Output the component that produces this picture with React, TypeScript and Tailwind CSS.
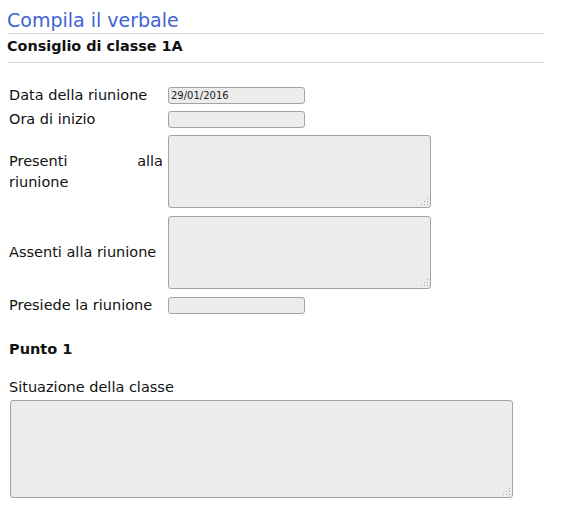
import React from "react";

const field =
  "block bg-[#ececec] border border-[#a3a3a3] rounded-[3px] outline-none text-[10px] px-[2px] text-[#222]";

function Grip() {
  return (
    <svg
      className="absolute right-[2px] bottom-[2px]"
      width="9"
      height="9"
      viewBox="0 0 9 9"
    >
      {[
        [7, 1],
        [7, 4],
        [4, 4],
        [7, 7],
        [4, 7],
        [1, 7],
      ].map(([x, y], i) => (
        <rect key={i} x={x} y={y} width="1" height="1" fill="#a8a8a8" />
      ))}
    </svg>
  );
}

function Area({ cls }: { cls: string }) {
  return (
    <div className={"relative " + cls}>
      <textarea className={field + " w-full h-full resize-none"} />
      <Grip />
    </div>
  );
}

export default function App() {
  return (
    <div
      className="bg-white w-[561px] h-[519px] text-[14.5px] text-[#111]"
      style={{ fontFamily: '"DejaVu Sans", Verdana, sans-serif' }}
    >
      <div className="pl-[7px] w-[544px]">
        <h1 className="text-[19px] leading-[23px] pt-[9px] pb-[1px] text-[#3f63d4] border-b border-[#dcdcdc]">
          Compila il verbale
        </h1>
        <h2 className="text-[14.4px] font-bold leading-[17px] pt-[4px] pb-[7px] border-b border-[#dcdcdc]">
          Consiglio di classe 1A
        </h2>
      </div>
      <div className="pl-[9px] pt-[24px]">
        <div className="flex items-center h-[17px]">
          <div className="w-[159px]">Data della riunione</div>
          <input className={field + " w-[137px] h-[17px]"} defaultValue="29/01/2016" />
        </div>
        <div className="flex items-center h-[17px] mt-[7px]">
          <div className="w-[159px]">Ora di inizio</div>
          <input className={field + " w-[137px] h-[17px]"} />
        </div>
        <div className="flex items-center mt-[7px]">
          <div className="w-[154px] mr-[5px] text-justify [text-align-last:left] [word-spacing:3px] leading-[21px]">
            Presenti alla riunione
          </div>
          <Area cls="w-[263px] h-[73px]" />
        </div>
        <div className="flex items-center mt-[8px]">
          <div className="w-[159px]">Assenti alla riunione</div>
          <Area cls="w-[263px] h-[73px]" />
        </div>
        <div className="flex items-center h-[17px] mt-[8px]">
          <div className="w-[159px]">Presiede la riunione</div>
          <input className={field + " w-[137px] h-[17px]"} />
        </div>
        <div className="font-bold mt-[27px] leading-[17px]">Punto 1</div>
        <div className="mt-[21px] leading-[17px]">Situazione della classe</div>
        <Area cls="w-[503px] h-[98px] mt-[4px] ml-[1px]" />
      </div>
    </div>
  );
}
